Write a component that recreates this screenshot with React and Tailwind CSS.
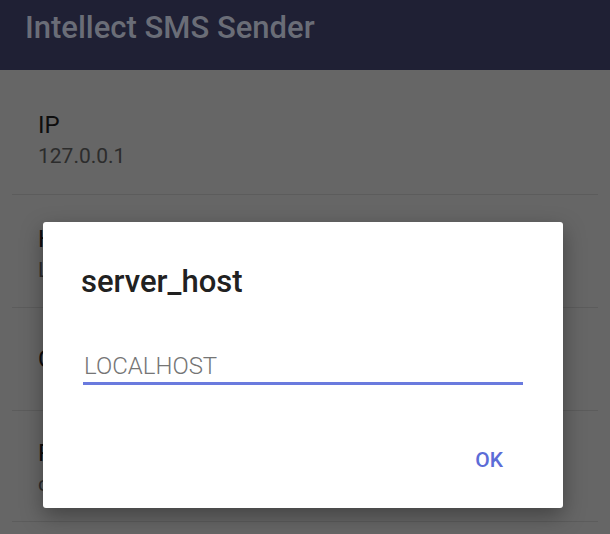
import React from 'react';

const rows = [
  { title: 'IP', summary: '127.0.0.1', pad: 'pt-[41px] pb-[25px]' },
  { title: 'Host', summary: 'LOCALHOST', pad: 'pt-[30px] pb-[24px]' },
  { title: 'Connect', summary: null, pad: 'pt-[37px] pb-[37px]' },
  { title: 'Port', summary: 'change port', pad: 'pt-[28px] pb-[24px]' },
];

const App = () => {
  return (
    <div
      className="relative w-[610px] h-[534px] overflow-hidden bg-[#666666]"
      style={{ fontFamily: 'Roboto, "Noto Sans", sans-serif' }}
    >
      {/* toolbar */}
      <div className="h-[70px] bg-[#1f2034] pl-[25px] pt-[10px]">
        <h1 className="text-[31px] leading-[36px] font-medium text-[#6a6d77]">Intellect SMS Sender</h1>
      </div>

      {/* preference list, dimmed behind the dialog */}
      <div className="px-[12px]">
        {rows.map((row) => (
          <div key={row.title} className={`border-b border-[#5c5c5c] pl-[26px] ${row.pad}`}>
            <div className="text-[24px] leading-[28px] text-[#0e0e0e]">{row.title}</div>
            {row.summary && (
              <div className="mt-[5px] text-[21px] leading-[25px] text-[#2c2c2c]">{row.summary}</div>
            )}
          </div>
        ))}
      </div>

      {/* edit text dialog */}
      <div className="absolute left-[43px] top-[222px] w-[520px] h-[286px] bg-white rounded-[3px] shadow-[0_8px_22px_rgba(0,0,0,0.35)] flex flex-col">
        <div className="pl-[38px] pt-[43px] text-[31px] leading-[34px] font-medium text-[#212121]">server_host</div>
        <div className="mx-[40px] mt-[53px] border-b-[3px] border-[#6a7ade] pb-[2px]">
          <div className="pl-[1px] text-[24px] leading-[28px] font-light text-[#757575]">LOCALHOST</div>
        </div>
        <div className="flex justify-end mt-[63px] pr-[60px]">
          <button className="text-[21px] leading-[25px] font-medium text-[#5c6cd7]">OK</button>
        </div>
      </div>
    </div>
  );
};

export default App;
